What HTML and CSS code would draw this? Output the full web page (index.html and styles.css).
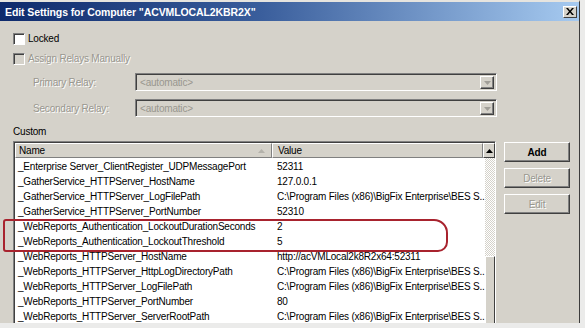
FILE: index.html
```html
<!DOCTYPE html>
<html lang="en">
<head>
<meta charset="UTF-8">
<title>Edit Settings</title>
<link rel="stylesheet" href="styles.css">
</head>
<body>
<div class="window">
    <div class="titlebar">
        <span class="title">Edit Settings for Computer "ACVMLOCAL2KBR2X"</span>
        <span class="close-btn">
            <svg width="8" height="7" viewBox="0 0 8 7"><path d="M0 0h2l2 2.5 2-2.5h2l-3 3.5 3 3.5h-2l-2-2.5-2 2.5h-2l3-3.5z" fill="#000"/></svg>
        </span>
    </div>
    <div class="content">
        <label class="check"><span class="box"></span>Locked</label>
        <label class="check disabled"><span class="box"></span>Assign Relays Manually</label>
        <div class="relays">
            <span class="relay-label">Primary Relay:</span>
            <div class="select"><span class="select-text">&lt;automatic&gt;</span><span class="drop-btn"><svg width="7" height="4" viewBox="0 0 7 4"><path d="M0 0h7l-3.5 4z" fill="#a09e98"/></svg></span></div>
            <span class="relay-label">Secondary Relay:</span>
            <div class="select"><span class="select-text">&lt;automatic&gt;</span><span class="drop-btn"><svg width="7" height="4" viewBox="0 0 7 4"><path d="M0 0h7l-3.5 4z" fill="#a09e98"/></svg></span></div>
        </div>
        <div class="group-label">Custom</div>
        <div class="custom">
            <div class="list">
                <div class="list-head">
                    <span class="col-name">Name<svg class="sort" width="7" height="4" viewBox="0 0 7 4"><path d="M3.5 0l3.5 4h-7z" fill="#b4b2ab"/></svg></span>
                    <span class="col-value">Value</span>
                    <span class="scroll-up"><svg width="7" height="4" viewBox="0 0 7 4"><path d="M3.5 0l3.5 4h-7z" fill="#000"/></svg></span>
                </div>
                <div class="list-body">
                    <div class="rows">
                        <div class="row"><span>_Enterprise Server_ClientRegister_UDPMessagePort</span><span>52311</span></div>
                        <div class="row"><span>_GatherService_HTTPServer_HostName</span><span>127.0.0.1</span></div>
                        <div class="row"><span>_GatherService_HTTPServer_LogFilePath</span><span>C:\Program Files (x86)\BigFix Enterprise\BES S..</span></div>
                        <div class="row"><span>_GatherService_HTTPServer_PortNumber</span><span>52310</span></div>
                        <div class="row"><span>_WebReports_Authentication_LockoutDurationSeconds</span><span>2</span></div>
                        <div class="row"><span>_WebReports_Authentication_LockoutThreshold</span><span>5</span></div>
                        <div class="row"><span>_WebReports_HTTPServer_HostName</span><span>http://acVMLocal2k8R2x64:52311</span></div>
                        <div class="row"><span>_WebReports_HTTPServer_HttpLogDirectoryPath</span><span>C:\Program Files (x86)\BigFix Enterprise\BES S..</span></div>
                        <div class="row"><span>_WebReports_HTTPServer_LogFilePath</span><span>C:\Program Files (x86)\BigFix Enterprise\BES S..</span></div>
                        <div class="row"><span>_WebReports_HTTPServer_PortNumber</span><span>80</span></div>
                        <div class="row"><span>_WebReports_HTTPServer_ServerRootPath</span><span>C:\Program Files (x86)\BigFix Enterprise\BES S..</span></div>
                    </div>
                    <div class="vscroll">
                        <div class="track"></div>
                        <div class="thumb"></div>
                    </div>
                </div>
            </div>
            <div class="buttons">
                <button class="btn btn-default">Add</button>
                <button class="btn" disabled>Delete</button>
                <button class="btn" disabled>Edit</button>
            </div>
        </div>
    </div>
    <div class="annotation"></div>
</div>
</body>
</html>
```

FILE: styles.css
```css
body {
    margin: 0;
    padding: 0;
    background-color: #ebebea;
    font-family: "Liberation Sans", Arial, sans-serif;
    font-size: 10px;
    letter-spacing: -0.2px;
    color: #000;
}
.window {
    position: relative;
    width: 580px;
    height: 323px;
    box-sizing: border-box;
    background-color: #d5d2ca;
    border-top: 2px solid #e6e4df;
    border-right: 1px solid #3c3c3c;
    overflow: hidden;
}
.titlebar {
    height: 19px;
    display: flex;
    align-items: center;
    justify-content: space-between;
    padding: 0 2px 0 5px;
    background: linear-gradient(to right, #0e2a6c, #3a5e9c 45%, #a6caf0);
}
.title {
    color: #fff;
    font-weight: bold;
    font-size: 10.5px;
    letter-spacing: -0.1px;
}
.close-btn {
    width: 14px;
    height: 12px;
    box-sizing: border-box;
    display: flex;
    align-items: center;
    justify-content: center;
    background-color: #d5d2ca;
    border: 1px solid;
    border-color: #fff #404040 #404040 #fff;
}
.content {
    padding: 11px 0 0 13px;
    display: flex;
    flex-direction: column;
}
.check {
    display: flex;
    align-items: center;
    height: 13px;
    gap: 3px;
}
.check + .check {
    margin-top: 7px;
}
.box {
    width: 10px;
    height: 10px;
    background-color: #fff;
    border: 1px solid;
    border-color: #808080 #fff #fff #808080;
    box-shadow: inset 1px 1px 0 #404040;
}
.disabled {
    color: #99978f;
    text-shadow: 1px 1px 0 #fff;
}
.disabled .box {
    background-color: #d5d2ca;
}
.relays {
    display: grid;
    grid-template-columns: 102px 362px;
    row-gap: 8px;
    margin-top: 8px;
    padding-left: 20px;
    align-items: center;
}
.relay-label {
    color: #99978f;
    text-shadow: 1px 1px 0 #fff;
}
.select {
    height: 18px;
    box-sizing: border-box;
    display: flex;
    align-items: center;
    justify-content: space-between;
    border: 1px solid;
    border-color: #808080 #fff #fff #808080;
    box-shadow: inset 1px 1px 0 #404040;
    padding: 1px 2px 0 4px;
}
.select-text {
    color: #99978f;
}
.drop-btn {
    width: 14px;
    height: 13px;
    box-sizing: border-box;
    display: flex;
    align-items: center;
    justify-content: center;
    border: 1px solid;
    border-color: #fff #404040 #404040 #fff;
    box-shadow: inset -1px -1px 0 #808080;
}
.group-label {
    margin-top: 8px;
    height: 13px;
    line-height: 13px;
}
.custom {
    display: flex;
    gap: 8px;
    margin-top: 3px;
}
.list {
    width: 483px;
    height: 184px;
    box-sizing: border-box;
    border: 1px solid;
    border-color: #808080 #fff #fff #808080;
    box-shadow: inset 1px 1px 0 #404040;
    padding: 1px 0 0 1px;
    background-color: #fff;
    display: flex;
    flex-direction: column;
}
.list-head {
    display: flex;
    height: 15px;
}
.col-name, .col-value {
    box-sizing: border-box;
    background-color: #d5d2ca;
    border: 1px solid;
    border-color: #fff #808080 #808080 #fff;
    line-height: 13px;
}
.col-name {
    width: 257px;
    padding: 0 6px 0 3px;
    display: flex;
    align-items: center;
    justify-content: space-between;
}
.col-value {
    flex: 1;
    padding-left: 5px;
}
.scroll-up {
    width: 12px;
    box-sizing: border-box;
    display: flex;
    align-items: center;
    justify-content: center;
    background-color: #d5d2ca;
    border: 1px solid;
    border-color: #fff #404040 #404040 #fff;
}
.list-body {
    flex: 1;
    display: flex;
    min-height: 0;
}
.rows {
    flex: 1;
    padding-top: 1px;
}
.row {
    display: grid;
    grid-template-columns: 257px 1fr;
    height: 15px;
    line-height: 15px;
    white-space: nowrap;
}
.row span:first-child {
    padding-left: 3px;
}
.row span:last-child {
    padding-left: 5px;
}
.vscroll {
    width: 12px;
    display: flex;
    flex-direction: column;
}
.track {
    height: 98px;
    background: repeating-conic-gradient(#d5d2ca 0 25%, #fff 0 50%) 0 0 / 2px 2px;
}
.thumb {
    flex: 1;
    box-sizing: border-box;
    background-color: #d5d2ca;
    border: 1px solid;
    border-color: #fff #404040 #404040 #fff;
}
.buttons {
    display: flex;
    flex-direction: column;
    gap: 6px;
    margin-top: 1px;
}
.btn {
    width: 66px;
    height: 20px;
    font-family: "Liberation Sans", Arial, sans-serif;
    font-size: 10px;
    letter-spacing: -0.2px;
    color: #000;
    background-color: #d5d2ca;
    border: 1px solid;
    border-color: #fff #404040 #404040 #fff;
    box-shadow: inset -1px -1px 0 #808080;
    padding: 0;
}
.btn-default {
    font-weight: bold;
}
.btn:disabled {
    color: #99978f;
    text-shadow: 1px 1px 0 #fff;
}
.annotation {
    position: absolute;
    left: 3px;
    top: 217px;
    width: 441px;
    height: 29px;
    border: 2px solid #a8232e;
    border-radius: 3px 14px 10px 3px;
}
```
